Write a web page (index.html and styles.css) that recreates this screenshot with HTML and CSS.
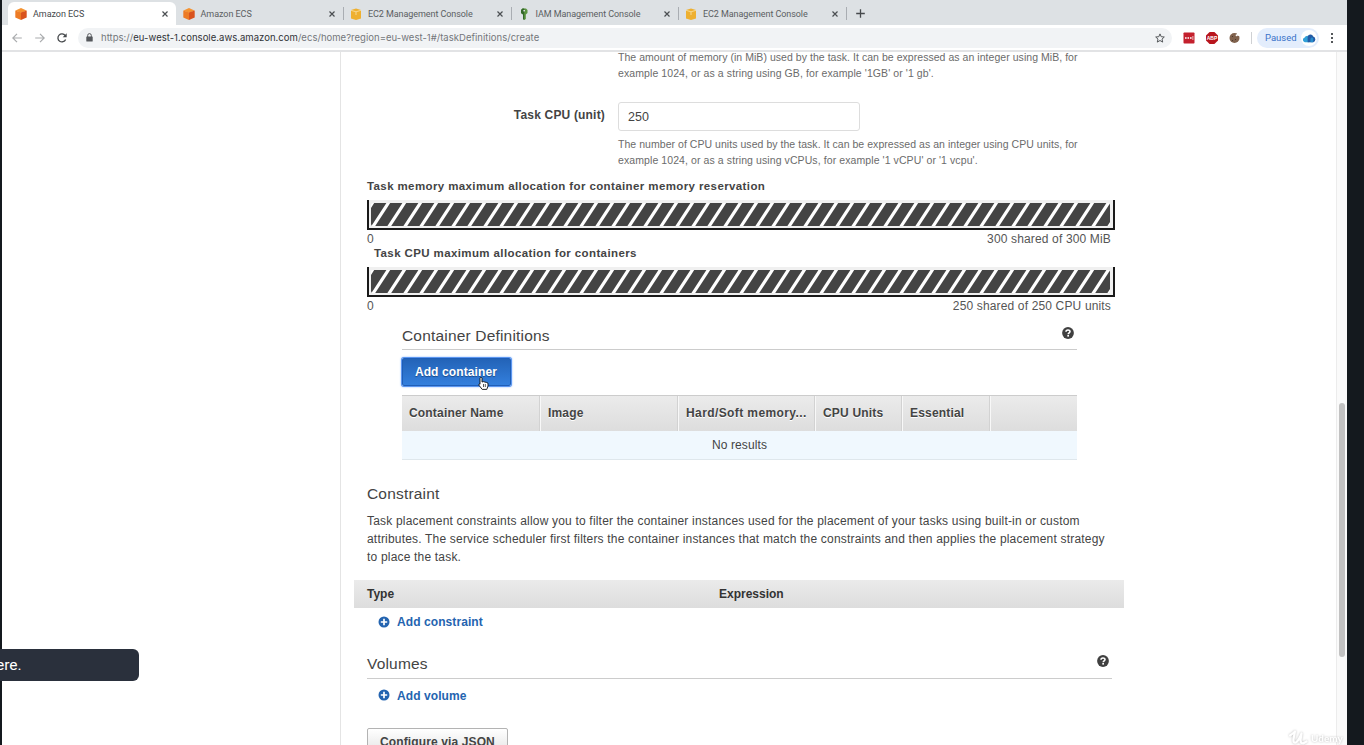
FILE: index.html
```
<!DOCTYPE html>
<html lang="en">
<head>
<meta charset="utf-8">
<title>Amazon ECS</title>
<link rel="stylesheet" href="styles.css">
</head>
<body>
<svg class="defs" aria-hidden="true">
  <defs>
    <pattern id="hatch" width="16" height="23" patternUnits="userSpaceOnUse">
      <rect width="16" height="23" fill="#444"/>
      <path d="M15.400 0H19.200L4.200 23H.4ZM-.6 0H3.200L-11.800 23H-15.600Z" fill="#fff"/>
    </pattern>
    <symbol id="cube" viewBox="0 0 12 12">
      <path d="M6 0 11.5 2.4 6 5 .5 2.4Z" fill="#f59331"/>
      <path d="M.3 2.4 6 4.6V12L.3 9.5Z" fill="#ed7b25"/>
      <path d="M11.7 2.4 6 4.6V12l5.7-2.5Z" fill="#d9531e"/>
    </symbol>
    <symbol id="box" viewBox="0 0 12 12">
      <path d="M1 2 6 .6 11 2v8.5L6 12 1 10.500Z" fill="#eeb030"/>
      <path d="M1 2.300 6 3.800 11 2.300M6 3.800V7" fill="none" stroke="#f8dc9b" stroke-width=".9"/>
    </symbol>
    <symbol id="close" viewBox="0 0 8 8"><path d="M1.500 1.500 6.500 6.500M6.500 1.500 1.500 6.500" stroke="#4b4e52" stroke-width="1.200"/></symbol>
    <symbol id="help" viewBox="0 0 12 12">
      <circle cx="6" cy="6" r="5.900" fill="#404040"/>
      <path d="M4 4.700C4 2.400 8 2.400 8 4.600 8 5.900 6.200 5.800 6.200 7.200" fill="none" stroke="#fff" stroke-width="1.600"/>
      <rect x="5.300" y="8" width="1.700" height="1.600" fill="#fff"/>
    </symbol>
    <symbol id="plus" viewBox="0 0 12 12">
      <circle cx="6" cy="6" r="5.500" fill="#2464b0"/>
      <path d="M6 2.800V9.200M2.800 6H9.200" stroke="#fff" stroke-width="1.700"/>
    </symbol>
  </defs>
</svg>
<div class="window">
  <div class="tabs">
    <div class="tab active"><svg class="fav"><use href="#cube"/></svg><span>Amazon ECS</span><svg class="x"><use href="#close"/></svg></div>
    <div class="tab"><svg class="fav"><use href="#cube"/></svg><span>Amazon ECS</span><svg class="x"><use href="#close"/></svg></div>
    <div class="tab sep"><svg class="fav"><use href="#box"/></svg><span class="wide">EC2 Management Console</span><svg class="x"><use href="#close"/></svg></div>
    <div class="tab sep"><svg class="fav" viewBox="0 0 12 12"><path d="M3 2 4.500 .5H8L9.500 2V5L7.800 6.500V11L6.200 12 5 11V6.500L3 5Z" fill="#5b9440"/><path d="M3 2 4.500 .5H6.200V12L5 11V6.500L3 5Z" fill="#34682a"/><rect x="5.400" y="2" width="1.600" height="1.400" fill="#dee1e5"/></svg><span class="wide">IAM Management Console</span><svg class="x"><use href="#close"/></svg></div>
    <div class="tab sep"><svg class="fav"><use href="#box"/></svg><span class="wide">EC2 Management Console</span><svg class="x"><use href="#close"/></svg></div>
    <div class="newtab sep"><svg width="9" height="9" viewBox="0 0 9 9"><path d="M4.500 .2V8.800M.2 4.500H8.800" stroke="#46494c" stroke-width="1.300"/></svg></div>
  </div>
  <div class="toolbar">
    <svg class="nav" viewBox="0 0 10 10"><path d="M9.800 5H.8M5 .8.8 5 5 9.200" fill="none" stroke="#a9abad" stroke-width="1.200"/></svg>
    <svg class="nav" viewBox="0 0 10 10"><path d="M.2 5H9.200M5 .8 9.200 5 5 9.200" fill="none" stroke="#a9abad" stroke-width="1.200"/></svg>
    <svg class="nav" viewBox="0 0 10 10"><path d="M8.600 6.500A4 4 0 1 1 8.200 2.600" fill="none" stroke="#46494c" stroke-width="1.300"/><path d="M9.700 .2V4.200H5.700Z" fill="#46494c"/></svg>
    <div class="address">
      <svg class="lock" viewBox="0 0 7 9"><rect x=".3" y="3.500" width="6.400" height="5" rx=".6" fill="#55585c"/><path d="M1.700 4V2.400a1.800 1.800 0 0 1 3.600 0V4" fill="none" stroke="#55585c"/></svg>
      <span class="url">https://<b>eu-west-1.console.aws.amazon.com</b>/ecs/home?region=eu-west-1#/taskDefinitions/create</span>
      <svg class="star" viewBox="0 0 10 10"><path d="M5 .9 6.200 3.700 9.300 4 7 6.100 7.700 9.100 5 7.500 2.300 9.100 3 6.100.7 4 3.800 3.700Z" fill="none" stroke="#54575a" stroke-width="1"/></svg>
    </div>
    <div class="extensions">
      <svg width="12" height="12" viewBox="0 0 12 12"><rect x=".5" y=".5" width="11" height="11" rx=".8" fill="#c4202d"/><path d="M2 6H9" stroke="#fff" stroke-width="1.600" stroke-dasharray="1.600 .9"/><path d="M9.900 4V8" stroke="#fff" stroke-width=".7"/></svg>
      <svg width="12" height="12" viewBox="0 0 12 12"><path d="M3.600 0H8.400L12 3.600V8.400L8.400 12H3.600L0 8.400V3.600Z" fill="#b8151d"/><text x="6" y="8" class="abp">ABP</text></svg>
      <svg width="11" height="12" viewBox="0 0 11 12"><circle cx="5.500" cy="6" r="5" fill="#80624d"/><circle cx="7.600" cy="3.200" r="1" fill="#fff"/><circle cx="9.800" cy="2" r="2" fill="#fff"/><path d="M3 4h1v1H3ZM3 8h1v1H3ZM6 7h1v1H6Z" fill="#4a382e"/></svg>
    </div>
    <div class="profile"><span>Paused</span><span class="avatar"><svg width="13" height="10" viewBox="0 0 14 10"><path d="M2 9.500A2.500 2.500 0 0 1 1.500 4.700 4 4 0 0 1 5 2.500L7 9.500Z" fill="#31a0d8"/><path d="M5 9.500V3A3.300 3.300 0 0 1 11 3.500 3.100 3.100 0 0 1 11 9.500Z" fill="#235ba6"/><path d="M8 9.500V6A2 2 0 0 1 11 5V9.500Z" fill="#278dcd"/></svg></span></div>
    <svg class="more" viewBox="0 0 4 12"><path d="M1 1h2v2H1ZM1 5h2v2H1ZM1 9h2v2H1Z" fill="#54575a"/></svg>
  </div>
  <div class="page">
    <div class="side"></div>
    <main class="content">
      <p class="hint hint-memory"><span>The amount of memory (in MiB) used by the task. It can be expressed as an integer using MiB, for</span><span class="loose">example 1024, or as a string using GB, for example '1GB' or '1 gb'.</span></p>
      <div class="field"><label for="cpu">Task CPU (unit)</label><input id="cpu" value="250"></div>
      <p class="hint"><span>The number of CPU units used by the task. It can be expressed as an integer using CPU units, for</span><span class="loose">example 1024, or as a string using vCPUs, for example '1 vCPU' or '1 vcpu'.</span></p>
      <section class="allocation">
        <h4>Task memory maximum allocation for container memory reservation</h4>
        <div class="meter"><svg><rect width="739" height="23" rx="2" fill="url(#hatch)"/></svg></div>
        <div class="scale"><span>0</span><span>300 shared of 300 MiB</span></div>
      </section>
      <section class="allocation second">
        <h4>Task CPU maximum allocation for containers</h4>
        <div class="meter"><svg><rect width="739" height="23" rx="2" fill="url(#hatch)"/></svg></div>
        <div class="scale"><span>0</span><span>250 shared of 250 CPU units</span></div>
      </section>
      <section class="definitions">
        <div class="heading"><h3>Container Definitions</h3><svg class="help"><use href="#help"/></svg></div>
        <button class="primary">Add container<svg class="cursor" viewBox="0 0 11 13"><path d="M2 1.200C2 .2 4 .2 4 1.200V5L5.500 4.600 7 5.100 8.400 5.400 10 6.200V9L8.800 12.400H4.200L1 8.300C.3 7.300 1.300 6.600 2 7.300Z" fill="#fff" stroke="#111" stroke-width=".9"/><path d="M5.500 7V10M7.300 7V10" stroke="#111" stroke-width=".7"/></svg></button>
        <div class="grid">
          <div class="cells"><span>Container Name</span><span>Image</span><span class="memory">Hard/Soft memory...</span><span>CPU Units</span><span>Essential</span><span></span></div>
          <div class="empty">No results</div>
        </div>
      </section>
      <section class="constraint">
        <h3>Constraint</h3>
        <p class="desc"><span>Task placement constraints allow you to filter the container instances used for the placement of your tasks using built-in or custom</span><span>attributes. The service scheduler first filters the container instances that match the constraints and then applies the placement strategy</span><span>to place the task.</span></p>
        <div class="bar"><span>Type</span><span>Expression</span></div>
        <a class="add"><svg><use href="#plus"/></svg><span>Add constraint</span></a>
      </section>
      <section class="volumes">
        <div class="heading"><h3>Volumes</h3><svg class="help"><use href="#help"/></svg></div>
        <a class="add"><svg><use href="#plus"/></svg><span>Add volume</span></a>
        <button class="secondary">Configure via JSON</button>
      </section>
    </main>
    <div class="track"><div class="thumb"></div></div>
  </div>
</div>
<div class="caption">ere.</div>
<div class="watermark"><svg width="19" height="15" viewBox="0 0 19 15"><path d="M1 5.500Q4 3.500 6 1.500L4.500 9Q4 13.500 7 12.500 10 10 12.500 3.500L11.500 10Q11.500 13.500 14 13.500L17.500 11.500" fill="none" stroke="#fff" stroke-width="2.200" stroke-linecap="round" stroke-linejoin="round"/></svg><span>Udemy</span></div>
</body>
</html>
```
FILE: styles.css
```
* { box-sizing: border-box; }
body { margin: 0; width: 1364px; height: 745px; overflow: hidden; background: #14191e; font-family: "Liberation Sans", Arial, sans-serif; color: #444; position: relative; }
.defs { position: absolute; width: 0; height: 0; }
h3, h4, p { margin: 0; }
button, input { font: inherit; }
svg { display: block; flex: none; }
.window { margin-left: 2px; width: 1345px; height: 745px; background: #fff; display: flex; flex-direction: column; overflow: hidden; }

.tabs { height: 25px; flex: none; display: flex; align-items: center; padding: 2px 0 0 6px; background: #dde1e4; }
.tab { width: 167.500px; height: 23px; display: flex; align-items: center; padding: 0 7px; font: 9px Roboto, sans-serif; letter-spacing: -.05px; color: #5b5e62; white-space: nowrap; }
.tab.active { background: #fff; border-radius: 6px 6px 0 0; color: #45484c; }
.tab span { flex: 1; margin-left: 6px; }
.tab .wide { letter-spacing: -.07px; }
.fav { width: 12px; height: 12px; }
.x { width: 8px; height: 8px; }
.sep { background: linear-gradient(#a9adb2, #a9adb2) left 5px / 1px 13px no-repeat; }
.newtab { height: 23px; padding: 7px 10px; }

.toolbar { height: 27px; flex: none; display: flex; align-items: center; padding: 0 0 0 10px; border-bottom: 2px solid #e2e3e5; background: #fff; }
.nav { width: 10px; height: 10px; margin-right: 13px; }
.nav + .nav { margin-right: 12px; }
.address { width: 1094px; height: 20px; border-radius: 10px; background: #f1f3f5; display: flex; align-items: center; padding: 0 7px 0 8px; margin-left: -1px; }
.lock { width: 7px; height: 9px; margin-right: 8px; }
.url { flex: 1; font: 9.500px Inter, sans-serif; letter-spacing: .03px; color: #74777b; white-space: nowrap; }
.url b { font-weight: 400; color: #303235; }
.star { width: 10px; height: 10px; }
.extensions { display: flex; align-items: center; gap: 11px; margin-left: 11px; padding-right: 11px; border-right: 1px solid #cfd1d4; }
.abp { font: bold 5px "Liberation Sans", sans-serif; fill: #fff; text-anchor: middle; }
.profile { display: flex; align-items: center; justify-content: space-between; width: 62px; height: 20px; margin-left: 5px; padding: 0 2px 0 8px; border-radius: 10px; background: #e3edfc; font: 9.500px Roboto, sans-serif; color: #3a73c9; }
.avatar { width: 16px; height: 16px; border-radius: 8px; background: #fff; display: grid; place-items: center; }
.more { width: 4px; height: 12px; margin-left: 11px; }

.page { flex: 1; min-height: 0; display: flex; }
.side { width: 339px; border-right: 1px solid #e4e4e4; flex: none; }
.content { flex: 1; min-width: 0; overflow: hidden; padding-left: 26px; }
.track { width: 11px; border-left: 1px solid #ececec; background: #fafafa; padding: 351px 2px 0; }
.thumb { width: 6px; height: 254px; border-radius: 3px; background: #c2c2c2; }

.hint { margin-left: 251px; font-size: 10.500px; line-height: 15.500px; letter-spacing: .045px; color: #6b6b6b; white-space: nowrap; }
.hint .loose { letter-spacing: .09px; }
.hint span, .desc span { display: block; width: max-content; }
.hint-memory { margin-top: -2px; }
.field { display: flex; margin-top: 21px; height: 29px; }
.field label { width: 238px; text-align: right; font-size: 12px; letter-spacing: .18px; font-weight: bold; line-height: 27px; }
.field input { width: 242px; height: 29px; margin-left: 13px; border: 1px solid #ddd; border-radius: 3px; padding: 0 9px; font-size: 12.500px; color: #444; background: #fff; }
.field + .hint { margin-top: 6px; }

.allocation { width: 748px; margin-top: 10px; }
.allocation h4 { width: max-content; height: 22px; font-size: 11.500px; line-height: 16px; letter-spacing: .39px; white-space: nowrap; }
.second { margin-top: 0; }
.second h4 { margin-top: -1px; padding-left: 7px; }
.meter { height: 30px; border: 2px solid #1a1a1a; border-top: 0; background: #f0f0f0; padding: 3px 2px 0; }
.meter svg { width: 740px; height: 23px; }
.scale { display: flex; justify-content: space-between; padding-right: 4px; height: 16px; line-height: 18px; font-size: 12px; letter-spacing: .15px; color: #555; }

.definitions { width: 675px; margin: 13px 0 0 35px; }
.heading { display: flex; justify-content: space-between; border-bottom: 1px solid #ccc; }
.heading h3, .constraint h3 { font-size: 15.500px; letter-spacing: .18px; font-weight: 400; line-height: 20px; color: #444; }
.definitions .heading { height: 24px; }
.help { width: 12px; height: 12px; margin: 1px 3px 0 0; }
.primary { display: block; position: relative; width: 109px; height: 28px; margin: 8px 0 9px; padding: 0 1px 0 0; border: 1px solid #1f5eb7; border-radius: 2px; background: linear-gradient(#2363b7, #337fdd); color: #fff; font-size: 12px; letter-spacing: .12px; font-weight: bold; text-shadow: 0 1px 1px #184886; box-shadow: 0 0 0 1px #5b96f0, 0 0 2px 1px #8bb8ff; }
.cursor { position: absolute; left: 75px; top: 18px; width: 11px; height: 13px; }
.cells { display: grid; grid-template-columns: 139px 138px 137px 87px 88px 86px; height: 36px; border-top: 1px solid #ccc; background: linear-gradient(#ebebeb, #ddd); font-size: 12px; font-weight: bold; line-height: 35px; letter-spacing: .18px; text-shadow: 0 1px #fff; }
.cells span { padding-left: 7px; border-right: 1px solid #f8f8f8; box-shadow: inset -1px 0 #d2d2d2; white-space: nowrap; }
.cells .memory { letter-spacing: .4px; }
.cells span:last-child { border: 0; box-shadow: none; }
.empty { height: 29px; line-height: 28px; font-size: 12px; letter-spacing: .1px; text-align: center; background: #f0f8fe; border-bottom: 1px solid #dfe7ec; }

.constraint { margin-top: 24px; }
.constraint h3 { height: 20px; }
.desc { margin-top: 8px; font-size: 12px; line-height: 18px; letter-spacing: .19px; white-space: nowrap; }
.bar { display: flex; width: 770px; height: 28px; margin: 14px 0 0 -13px; padding-left: 13px; background: linear-gradient(#ebebeb, #ddd); font-size: 12px; font-weight: bold; line-height: 29px; color: #333; }
.bar span:first-child { width: 352px; }
.add { display: flex; align-items: center; height: 28px; padding-left: 11px; gap: 7px; font-size: 12px; font-weight: bold; letter-spacing: .08px; color: #2464b0; }
.add svg { width: 12px; height: 12px; margin-top: -1px; }
.volumes { width: 745px; margin-top: 18px; }
.volumes .heading { height: 25px; }
.volumes .add { height: 33px; }
.secondary { display: block; width: 141px; height: 28px; margin-top: 16px; padding: 0; border: 1px solid #b3b3b3; border-radius: 2px; background: linear-gradient(#fff, #e2e2e2); color: #444; font-size: 12px; letter-spacing: .12px; font-weight: bold; }

.caption { position: absolute; left: 0; top: 649px; width: 139px; height: 32px; border-radius: 0 6px 6px 0; background: #2a303c; color: #fff; font: 15.500px/32px Roboto, sans-serif; text-indent: -4px; overflow: hidden; }
.watermark { position: absolute; left: 1289px; top: 730px; display: flex; align-items: center; gap: 3px; color: #fff; font: bold 10px Lato, sans-serif; filter: drop-shadow(0 0 1px #bbb); }
```
